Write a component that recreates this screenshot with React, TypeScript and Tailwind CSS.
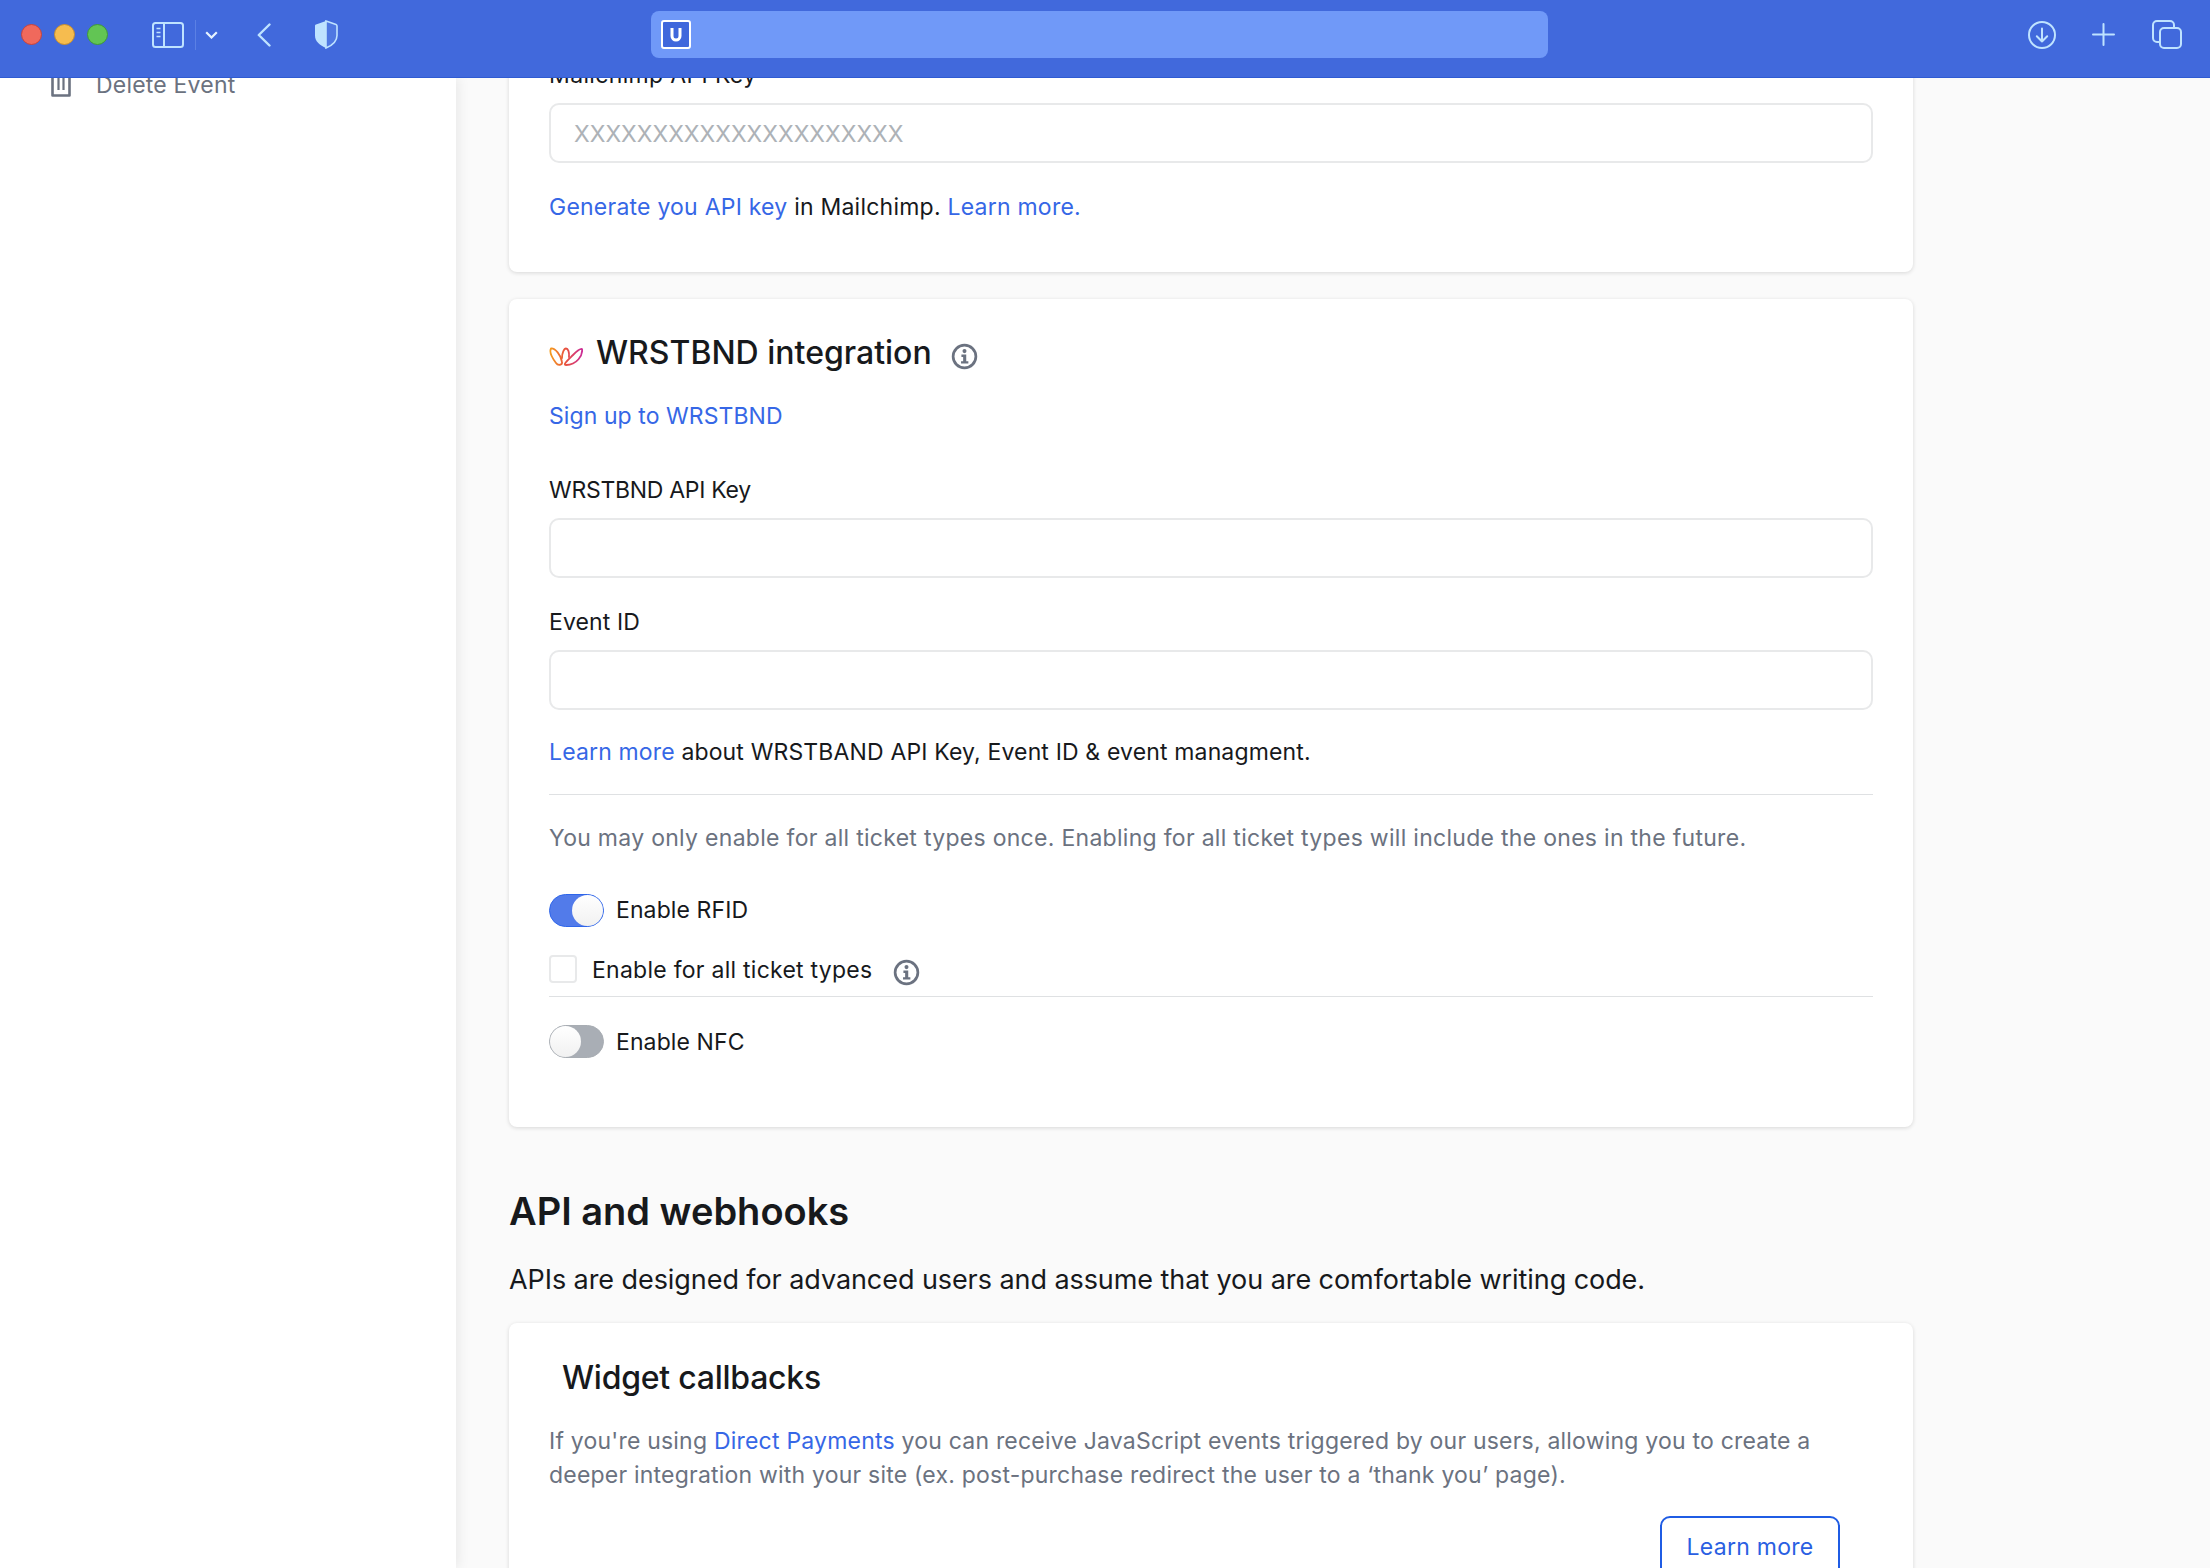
import React from "react";

const font = "font-['Inter','Noto_Sans',sans-serif]";

const Info = ({ className }: { className: string }) => (
  <svg viewBox="0 0 28 28" className={className} fill="none">
    <circle cx="14" cy="14" r="11.8" stroke="#6b7280" strokeWidth="2.8" />
    <circle cx="14" cy="8.4" r="2.1" fill="#6b7280" />
    <path d="M10.800 12h5v6.800h2.200v2.400H10.400v-2.400h2.200v-4.400h-1.800z" fill="#6b7280" />
  </svg>
);

const Toggle = ({ on }: { on: boolean }) => (
  <div
    className={
      on
        ? "flex h-[33px] w-[55px] justify-end rounded-full border border-[#2f66ea] bg-[#527bea]"
        : "flex h-[33px] w-[55px] justify-start rounded-full border border-[#a8adb3] bg-[#a9aeb5]"
    }
  >
    <div className="h-[31px] w-[31px] rounded-full bg-gradient-to-b from-white to-[#f1f1f1]" />
  </div>
);

const Input = ({ placeholder }: { placeholder?: string }) => (
  <div className="flex h-[60px] w-full items-center rounded-[10px] border-2 border-[#e8e9ea] bg-white pl-[23px] text-[23px] text-[#adb2b7]">
    <span className="mt-[2px]">{placeholder}</span>
  </div>
);

const Link = ({ children }: { children: React.ReactNode }) => (
  <span className="text-[#3667e6]">{children}</span>
);

const TopBar = () => (
  <div className="relative z-10 flex h-[78px] shrink-0 items-center border-b border-[#2f5bd2] bg-[#4169dc] pb-[8px] text-[#bfe3ff]">
    <div className="ml-[21px] flex gap-[12px]">
      <div className="h-[21px] w-[21px] rounded-full border border-[#c9433a] bg-[#f0695c]" />
      <div className="h-[21px] w-[21px] rounded-full border border-[#c98f2c] bg-[#f6bc4f]" />
      <div className="h-[21px] w-[21px] rounded-full border border-[#3f9a35] bg-[#62c554]" />
    </div>
    <svg viewBox="0 0 32 26" className="ml-[44px] h-[26px] w-[32px]" fill="none" stroke="currentColor">
      <rect x="1" y="1" width="30" height="24" rx="2.5" strokeWidth="2" />
      <path d="M12 1v24" strokeWidth="2" />
      <path d="M4.5 6.5h4M4.5 10.5h4M4.5 14.5h4" strokeWidth="1.6" />
    </svg>
    <div className="ml-[11px] h-[30px] w-px bg-[#5b80e4]" />
    <svg viewBox="0 0 13 8" className="ml-[9px] h-[8px] w-[13px]" fill="none" stroke="#e6f3ff" strokeWidth="2.2">
      <path d="M1.2 1.2L6.5 6.5l5.3-5.3" />
    </svg>
    <svg viewBox="0 0 14 24" className="ml-[39px] h-[24px] w-[14px]" fill="none" stroke="currentColor" strokeWidth="2.4" strokeLinecap="round" strokeLinejoin="round">
      <path d="M12.5 1.5L1.8 12l10.7 10.5" />
    </svg>
    <svg viewBox="0 0 24 29" className="ml-[43px] h-[29px] w-[24px]">
      <path d="M12 1v27c-6-2.500-11-6.500-11-12.500V6.100c0-.8.2-1.300 1-1.600z" fill="#bfe3ff" />
      <path d="M12 1l10 3.500c.8.3 1 .8 1 1.600v9.400C23 21.500 18 25.500 12 28z" fill="#4f78e2" stroke="#bfe3ff" strokeWidth="1.600" />
    </svg>
    <div className="ml-[313px] flex h-[47px] w-[897px] items-center rounded-[8px] bg-[#7099f8] pl-[10px]">
      <div className="flex h-[29px] w-[30px] items-center justify-center rounded-[3px] border-2 border-white bg-[#3f67dc]">
        <svg viewBox="0 0 12 14" className="h-[14px] w-[12px]" fill="none" stroke="white" strokeWidth="3">
          <path d="M2 0v8a4 4 0 0 0 8 0V0" />
        </svg>
      </div>
    </div>
    <svg viewBox="0 0 28 28" className="ml-[480px] h-[28px] w-[28px]" fill="none" stroke="currentColor" strokeWidth="2" strokeLinecap="round" strokeLinejoin="round">
      <circle cx="14" cy="14" r="13" />
      <path d="M14 7.500v13M8.800 15.300L14 20.500l5.200-5.200" />
    </svg>
    <svg viewBox="0 0 23 23" className="ml-[36px] h-[23px] w-[23px]" fill="none" stroke="currentColor" strokeWidth="2" strokeLinecap="round">
      <path d="M11.500 1v21M1 11.500h21" />
    </svg>
    <svg viewBox="0 0 30 29" className="ml-[37px] h-[29px] w-[30px]" fill="none" stroke="currentColor" strokeWidth="2">
      <path d="M7.500 22H5a4 4 0 0 1-4-4V5a4 4 0 0 1 4-4h13a4 4 0 0 1 4 4v2.500" />
      <rect x="8" y="8" width="21" height="20" rx="4" />
    </svg>
  </div>
);

const Sidebar = () => (
  <div className="relative w-[456px] shrink-0 bg-white shadow-[2px_0_12px_rgba(0,0,0,0.08)]">
    <div className="-mt-[10px] flex items-center gap-[25px] pl-[51px] text-[23px] leading-[34px] tracking-[0.2px] text-[#6b7280]">
      <svg viewBox="0 0 20 28" className="mb-[4px] h-[28px] w-[20px]" fill="none" stroke="#6b7280" strokeLinejoin="round">
        <path d="M1.500 0v26.500h17V0" strokeWidth="2.600" />
        <path d="M7.500 4v17M12.500 4v17" strokeWidth="2.200" />
      </svg>
      Delete Event
    </div>
  </div>
);

const App = () => {
  return (
    <div className={`flex h-[1568px] w-full flex-col overflow-hidden bg-[#fafafa] text-[#17191c] ${font}`}>
      <TopBar />
      <div className="flex min-h-0 flex-1">
        <Sidebar />
        <div className="min-w-0 flex-1 pl-[53px]">
          <div className="-mt-[38px] w-[1404px]">
            <div className="rounded-[8px] bg-white px-[40px] pt-[18px] pb-[48px] shadow-[0_1px_4px_rgba(0,0,0,0.14)]">
              <div className="mb-[11px] text-[23px] leading-[34px] tracking-[0.35px]">Mailchimp API Key</div>
              <Input placeholder="XXXXXXXXXXXXXXXXXXXXX" />
              <p className="mt-[27px] text-[23px] leading-[34px] tracking-[0.23px]">
                <Link>Generate you API key</Link> in Mailchimp. <Link>Learn more.</Link>
              </p>
            </div>

            <div className="mt-[27px] rounded-[8px] bg-white px-[40px] pt-[32px] pb-[68px] shadow-[0_1px_4px_rgba(0,0,0,0.14)]">
              <div className="flex h-[44px] items-center">
                <svg viewBox="0 0 34 20" className="mt-[8px] h-[20px] w-[34px]" fill="none" strokeWidth="1.800" strokeLinejoin="round" strokeLinecap="round">
                  <defs>
                    <linearGradient id="wrst" gradientUnits="userSpaceOnUse" x1="0" x2="34" y1="0" y2="0">
                      <stop offset="0" stopColor="#f5a01c" />
                      <stop offset="0.5" stopColor="#e8503f" />
                      <stop offset="1" stopColor="#c92a9a" />
                    </linearGradient>
                  </defs>
                  <path d="M2 1.500C6 1 12 8 13 15c.5 3-4 4-6 1C4 12 0 5 2 1.500z" stroke="url(#wrst)" />
                  <path d="M13 11C13 6 15 1.500 17 1.500S20.500 5 20 10" stroke="url(#wrst)" />
                  <path d="M17 18c-4 0 3-6 7-10 3-3 7-6.500 9-6 1 6-5 16-16 16z" stroke="url(#wrst)" />
                </svg>
                <h2 className="ml-[13px] text-[32px] font-medium leading-[44px]">WRSTBND integration</h2>
                <Info className="ml-[19px] mt-[6px] h-[27px] w-[27px]" />
              </div>
              <div className="mt-[24px] text-[23px] leading-[34px] tracking-[0.08px]">
                <Link>Sign up to WRSTBND</Link>
              </div>
              <div className="mt-[40px] mb-[11px] text-[23px] leading-[34px] tracking-[-0.28px]">WRSTBND API Key</div>
              <Input />
              <div className="mt-[27px] mb-[11px] text-[23px] leading-[34px] tracking-[0.1px]">Event ID</div>
              <Input />
              <p className="mt-[25px] text-[23px] leading-[34px] tracking-[0.15px]">
                <Link>Learn more</Link> about WRSTBAND API Key, Event ID &amp; event managment.
              </p>
              <div className="mt-[25px] border-t border-[#dfe1e3]" />
              <p className="mt-[26px] text-[23px] leading-[34px] tracking-[0.29px] text-[#6b7280]">
                You may only enable for all ticket types once. Enabling for all ticket types will include the ones in the future.
              </p>
              <div className="mt-[38px] flex items-center gap-[12px] text-[23px] tracking-[0.1px]">
                <Toggle on />
                Enable RFID
              </div>
              <div className="mt-[27px] flex h-[31px] items-start text-[23px] tracking-[0.26px]">
                <div className="h-[28px] w-[28px] rounded-[4px] border-2 border-[#e8e9ea] bg-white" />
                <span className="ml-[15px] leading-[30px]">Enable for all ticket types</span>
                <Info className="ml-[21px] mt-[4px] h-[27px] w-[27px]" />
              </div>
              <div className="mt-[10px] border-t border-[#dfe1e3]" />
              <div className="mt-[28px] flex items-center gap-[12px] text-[23px] tracking-[0.1px]">
                <Toggle on={false} />
                Enable NFC
              </div>
            </div>

            <h1 className="mt-[59px] text-[38px] font-semibold leading-[50px]">API and webhooks</h1>
            <p className="mt-[24px] text-[27px] leading-[40px] tracking-[-0.07px]">
              APIs are designed for advanced users and assume that you are comfortable writing code.
            </p>

            <div className="mt-[23px] rounded-[8px] bg-white px-[40px] pt-[33px] shadow-[0_1px_4px_rgba(0,0,0,0.14)]">
              <h2 className="ml-[13px] text-[32px] font-medium leading-[44px] tracking-[-0.25px]">Widget callbacks</h2>
              <p className="mt-[24px] pr-[30px] text-[23px] leading-[34px] tracking-[0.21px] text-[#6b7280]">
                If you're using <Link>Direct Payments</Link> you can receive JavaScript events triggered by our users, allowing you to create a deeper integration with your site (ex. post-purchase redirect the user to a ‘thank you’ page).
              </p>
              <div className="mt-[24px] flex justify-end pr-[33px]">
                <div className="flex h-[62px] w-[180px] items-center justify-center rounded-[10px] border-2 border-[#1f5ce4] text-[23px] tracking-[0.25px] text-[#2a5fe2]">
                  Learn more
                </div>
              </div>
            </div>
          </div>
        </div>
      </div>
    </div>
  );
};

export default App;
